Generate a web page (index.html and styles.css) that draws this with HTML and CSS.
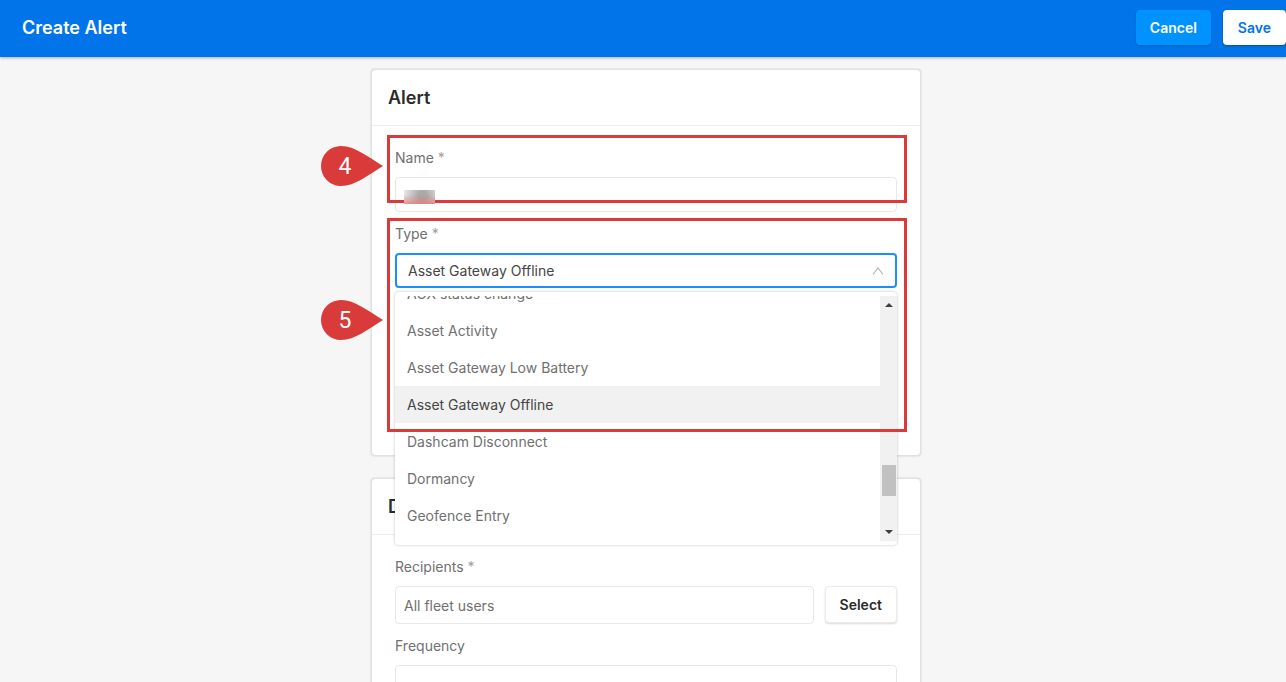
FILE: index.html
```html
<!DOCTYPE html>
<html lang="en">
<head>
    <meta charset="UTF-8">
    <meta name="viewport" content="width=device-width, initial-scale=1.0">
    <title>Create Alert</title>
    <link rel="stylesheet" href="styles.css">
</head>
<body>

    <header class="topbar">
        <h1>Create Alert</h1>
        <div class="actions">
            <button type="button" class="btn btn-cancel">Cancel</button>
            <button type="button" class="btn btn-save">Save</button>
        </div>
    </header>

    <main>
        <form class="form">
            <section class="card card-alert">
                <h2>Alert</h2>
                <div class="card-body">
                    <div class="field">
                        <label for="name">Name <span class="required">*</span></label>
                        <input type="text" id="name">
                        <div class="highlight highlight-name"></div>
                        <!-- Blurred value -->
                        <div class="redacted"></div>
                        <svg class="pin pin-name" viewBox="0 0 62 40">
                            <path d="M20 0C34 0 47 11 62 20C47 29 34 40 20 40A20 20 0 0 1 20 0Z"/>
                            <text x="24" y="28">4</text>
                        </svg>
                    </div>

                    <div class="field">
                        <label for="type">Type <span class="required">*</span></label>
                        <div class="select">
                            <select id="type">
                                <option>Asset Gateway Offline</option>
                            </select>
                            <svg class="chevron" viewBox="0 0 12 10">
                                <path d="M1 8.5L6 2L11 8.5"/>
                            </svg>
                        </div>

                        <div class="dropdown">
                            <ul class="options">
                                <li>AOX status change</li>
                                <li>Asset Activity</li>
                                <li>Asset Gateway Low Battery</li>
                                <li class="selected">Asset Gateway Offline</li>
                                <li>Dashcam Disconnect</li>
                                <li>Dormancy</li>
                                <li>Geofence Entry</li>
                            </ul>
                            <div class="scrollbar">
                                <svg viewBox="0 0 8 4"><path d="M0 4L4 0L8 4Z"/></svg>
                                <div class="track"><div class="thumb"></div></div>
                                <svg viewBox="0 0 8 4"><path d="M0 0L4 4L8 0Z"/></svg>
                            </div>
                        </div>

                        <div class="highlight highlight-type"></div>
                        <svg class="pin pin-type" viewBox="0 0 62 40">
                            <path d="M20 0C34 0 47 11 62 20C47 29 34 40 20 40A20 20 0 0 1 20 0Z"/>
                            <text x="24" y="28">5</text>
                        </svg>
                    </div>
                </div>
            </section>

            <section class="card">
                <h2>D</h2>
                <div class="card-body">
                    <div class="field">
                        <label for="recipients">Recipients <span class="required">*</span></label>
                        <div class="row">
                            <input type="text" id="recipients" value="All fleet users">
                            <button type="button" class="btn btn-select">Select</button>
                        </div>
                    </div>
                    <div class="field">
                        <label for="frequency">Frequency</label>
                        <input type="text" id="frequency">
                    </div>
                </div>
            </section>
        </form>
    </main>

</body>
</html>
```

FILE: styles.css
```css
* {
    box-sizing: border-box;
}
body {
    font-family: Inter, "Liberation Sans", sans-serif;
    font-size: 14px;
    line-height: 20px;
    margin: 0;
    height: 100vh;
    overflow: hidden;
    background-color: #f6f6f6;
    color: #707070;
}
.topbar {
    display: flex;
    justify-content: space-between;
    align-items: center;
    height: 57px;
    padding: 0 0 2px 22px;
    background-color: #0074e8;
    box-shadow: 0 1px 3px rgba(0, 0, 0, 0.3);
}
h1 {
    margin: 0;
    font-size: 18px;
    font-weight: 600;
    color: white;
}
.actions {
    display: flex;
    gap: 12px;
}
.btn {
    height: 35px;
    border: none;
    border-radius: 4px;
    font-family: inherit;
    font-size: 14px;
    font-weight: 600;
    padding: 0 14px;
}
.btn-cancel {
    background-color: #0092ff;
    color: white;
    box-shadow: 0 1px 2px rgba(0, 0, 0, 0.2);
}
.btn-save {
    padding: 0 15px;
    background-color: white;
    color: #0074e8;
    box-shadow: 0 1px 2px rgba(0, 0, 0, 0.3);
}
main {
    padding: 12px 8px 0 14px;
}
.form {
    display: flex;
    flex-direction: column;
    gap: 22px;
    max-width: 550px;
    margin: 0 auto;
}
.card {
    background-color: white;
    border: 1px solid #e2e2e2;
    border-radius: 4px;
    box-shadow: 0 0 2px rgba(0, 0, 0, 0.2);
}
.card-alert {
    min-height: 387px;
}
h2 {
    margin: 0;
    padding: 18px 16px 17px;
    font-size: 18px;
    font-weight: 600;
    color: #2b2b2b;
    border-bottom: 1px solid #ececec;
}
.card-body {
    display: flex;
    flex-direction: column;
    gap: 12px;
    padding: 22px 23px;
}
.field {
    position: relative;
    display: flex;
    flex-direction: column;
    gap: 9px;
}
.required {
    color: #a0a0a0;
}
input, select {
    width: 100%;
    height: 35px;
    padding: 0 8px;
    border: 1px solid #e8e8e8;
    border-radius: 4px;
    background-color: white;
    font-family: inherit;
    font-size: 14px;
    color: #707070;
}
.select {
    position: relative;
}
select {
    display: block;
    appearance: none;
    padding: 0 11px;
    border: 2px solid #1890ff;
    color: #454545;
}
.chevron {
    position: absolute;
    right: 13px;
    top: 13px;
    width: 12px;
    height: 10px;
    fill: none;
    stroke: #b5b5b5;
    stroke-width: 1.2;
}
.row {
    display: flex;
    gap: 11px;
}
.row input {
    height: 38px;
}
.btn-select {
    height: 37px;
    background-color: white;
    border: 1px solid #ebebeb;
    color: #2b2b2b;
    box-shadow: 0 1px 2px rgba(0, 0, 0, 0.15);
}

/* Open list of alert types */
.dropdown {
    position: absolute;
    top: 68px;
    left: 0;
    right: 0;
    z-index: 1;
    display: flex;
    height: 253px;
    padding: 4px 0;
    background-color: white;
    border-radius: 4px;
    box-shadow: 0 0 3px rgba(0, 0, 0, 0.25);
}
.options {
    flex: 1;
    margin: 0;
    padding: 0;
    overflow: hidden;
    list-style: none;
}
.options li {
    padding: 9px 12px 8px;
}
.options li:first-child {
    margin-top: -21px;
}
.options .selected {
    background-color: #f1f1f1;
    color: #454545;
}
.scrollbar {
    display: flex;
    flex-direction: column;
    align-items: center;
    width: 17px;
    padding: 7px 0;
    background-color: #f1f1f1;
}
.scrollbar svg {
    width: 8px;
    height: 4px;
    fill: #404040;
}
.track {
    flex: 1;
    padding-top: 158px;
}
.thumb {
    width: 14px;
    height: 31px;
    background-color: #c1c1c1;
}

/* Step markers */
.highlight {
    position: absolute;
    z-index: 2;
    left: -8px;
    right: -10px;
    border: 3px solid #d93a3a;
}
.highlight-name {
    top: -13px;
    height: 68px;
}
.highlight-type {
    top: -6px;
    height: 214px;
}
.pin {
    position: absolute;
    z-index: 2;
    left: -74px;
    width: 62px;
    height: 40px;
    fill: #d93a3a;
}
.pin-name {
    top: -2px;
}
.pin-type {
    top: 76px;
}
.pin text {
    fill: white;
    font-family: Roboto, sans-serif;
    font-size: 23px;
    text-anchor: middle;
}
.redacted {
    position: absolute;
    z-index: 3;
    top: 42px;
    left: 9px;
    width: 31px;
    height: 14px;
    background: linear-gradient(rgba(232, 110, 110, 0) 35%, rgba(232, 110, 110, 0.7)), radial-gradient(circle at 60% 40%, #a9a9a9 20%, #eeeeee);
}
```
